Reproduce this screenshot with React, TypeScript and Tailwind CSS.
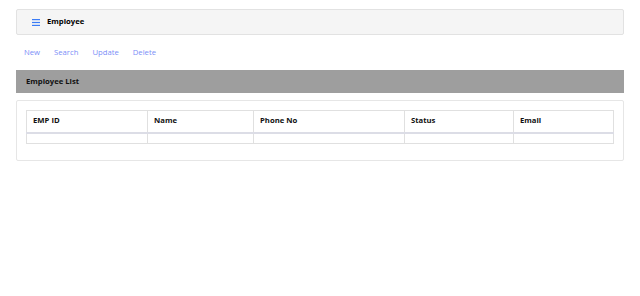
import React from "react";

const COLUMNS = [
  { title: "EMP ID", width: "w-[121px]" },
  { title: "Name", width: "w-[106px]" },
  { title: "Phone No", width: "w-[151px]" },
  { title: "Status", width: "w-[109px]" },
  { title: "Email", width: "" },
];

function App() {
  return (
    <div className="min-h-[296px] bg-white px-4 pt-[9px] font-['Open_Sans',sans-serif] text-[7.7px] text-black">
      {/* top bar */}
      <div className="flex h-[26px] items-center gap-[7px] rounded-[2px] border border-[#e2e2e2] bg-[#f5f5f5] pl-[15px]">
        <svg width="8" height="7" viewBox="0 0 8 7" className="text-[#3b7cf6]">
          <rect x="0" y="0" width="8" height="1.2" fill="currentColor" />
          <rect x="0" y="2.9" width="8" height="1.2" fill="currentColor" />
          <rect x="0" y="5.8" width="8" height="1.2" fill="currentColor" />
        </svg>
        <span className="font-bold">Employee</span>
      </div>

      {/* actions */}
      <div className="flex h-[35px] items-center gap-[14px] pl-[8px] text-[#7b8ef7]">
        <span>New</span>
        <span>Search</span>
        <span>Update</span>
        <span>Delete</span>
      </div>

      {/* list heading */}
      <div className="flex h-[23px] items-center bg-[#9e9e9e] pl-[10px] font-bold text-[#111]">
        Employee List
      </div>

      {/* card */}
      <div className="mt-[7px] rounded-[2px] border border-[#e6e6e6] px-[9px] pb-[16px] pt-[9px]">
        <table className="w-full border-collapse border border-[#e0e0e0]">
          <thead>
            <tr className="h-[22px]">
              {COLUMNS.map((c) => (
                <th
                  key={c.title}
                  className={`${c.width} border border-b-2 border-[#e0e0e0] border-b-[#dcdde6] pl-[6px] text-left font-bold text-[#111]`}
                >
                  {c.title}
                </th>
              ))}
            </tr>
          </thead>
          <tbody>
            <tr className="h-[11px]">
              {COLUMNS.map((c) => (
                <td key={c.title} className="border border-[#e0e0e0]"></td>
              ))}
            </tr>
          </tbody>
        </table>
      </div>
    </div>
  );
}

export default App;
